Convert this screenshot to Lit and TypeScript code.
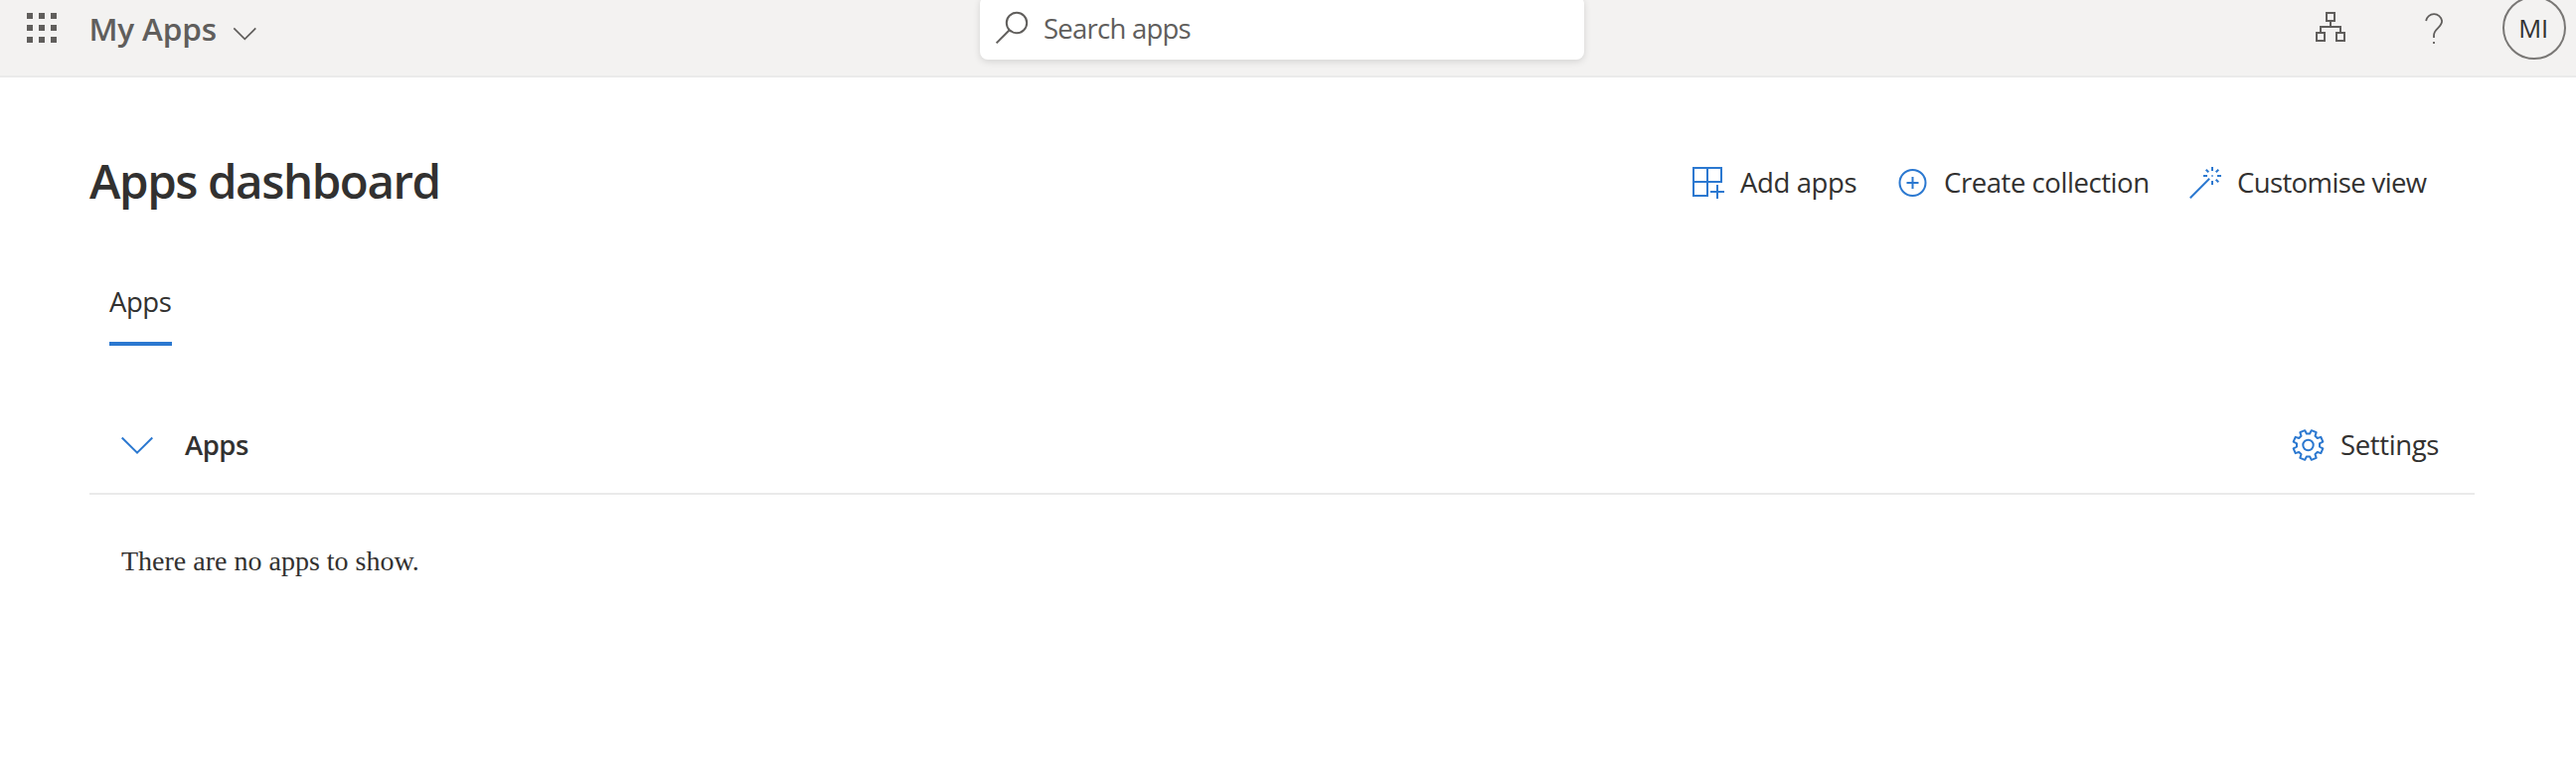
import { LitElement, html, css, svg } from "lit";
import { customElement } from "lit/decorators.js";

const gearPath = (() => {
  const pts: string[] = [];
  const at = (deg: number, r: number) => {
    const a = (deg * Math.PI) / 180;
    pts.push(`${(15.5 + r * Math.sin(a)).toFixed(2)} ${(16 - r * Math.cos(a)).toFixed(2)}`);
  };
  for (let k = 0; k < 8; k++) {
    const mid = 22.5 + 45 * k;
    at(mid - 14.5, 11.6);
    at(mid - 10, 15.2);
    at(mid + 10, 15.2);
    at(mid + 14.5, 11.6);
  }
  return `M${pts.join("L")}Z`;
})();

const icons = {
  add: svg`<path d="M1 1H29V15H1ZM15 1V29H1V15M18 25H32M25 18V32"/>`,
  create: svg`<circle cx="16.5" cy="16" r="13"/><path d="M10.5 16H22.5M16.5 10V22"/>`,
  wand: svg`<path d="M.8 31.2L20.2 11.8M23 0V4M23 14V18M14 9H18M28 9H32M16.7 2.7L19.3 5.3M26.7 5.3L29.3 2.7M26.7 12.7L29.3 15.3"/><path d="M22 9H24" opacity=".6"/>`,
  gear: svg`<path d=${gearPath} stroke-linejoin="round"/><circle cx="15.5" cy="16" r="5.2"/>`,
};

@customElement("app-root")
export class AppRoot extends LitElement {
  static styles = css`
    :host {
      display: block;
      height: 778px;
      overflow: hidden;
      background: #fff;
      color: #323130;
      font: 27.5px/40px "Open Sans", "Noto Sans", sans-serif;
    }
    * { box-sizing: border-box; }
    svg {
      display: block;
      flex: none;
      fill: none;
      stroke: currentColor;
      stroke-width: 2;
      overflow: visible;
    }
    .header {
      display: grid;
      grid-template-columns: 986px 608px 1fr;
      height: 78px;
      background: #f3f2f1;
      border-bottom: 2px solid #eaeaea;
      color: #605e5c;
      overflow: hidden;
    }
    .brand, .tools, .search {
      display: flex;
      align-items: center;
      height: 64px;
      margin-top: -4px;
    }
    .brand { padding-left: 27px; }
    .waffle {
      display: grid;
      grid-template-columns: repeat(3, 6px);
      gap: 6px;
    }
    .waffle i { height: 6px; background: #605e5c; }
    .product {
      margin: 2px 0 0 32.5px;
      width: 145px;
      font-size: 31.5px;
      font-weight: 600;
      letter-spacing: -0.15px;
      white-space: nowrap;
    }
    .brand svg { stroke-width: 1.7; margin-top: 12px; }
    .search {
      padding-left: 16px;
      gap: 16px;
      background: #fff;
      border-radius: 8px;
      box-shadow: 0 2px 7px rgba(0, 0, 0, 0.13);
      letter-spacing: -0.76px;
    }
    .search span { margin-top: 2px; }
    .tools { justify-content: flex-end; padding-right: 10px; }
    .org { margin-right: 77px; }
    .help { margin-right: 59px; stroke-width: 1.8; }
    .avatar {
      display: flex;
      align-items: center;
      justify-content: center;
      width: 64px;
      height: 64px;
      padding-right: 2px;
      border: 2px solid #797775;
      border-radius: 50%;
      color: #323130;
      font-size: 25.5px;
      letter-spacing: -0.4px;
    }
    .main { padding: 70px 102px 0 90px; }
    .top {
      display: flex;
      justify-content: space-between;
      align-items: center;
      height: 72px;
    }
    .title {
      margin: -4px 0 0;
      font-size: 47.5px;
      line-height: 64px;
      font-weight: 600;
      letter-spacing: -1.42px;
    }
    .actions {
      display: grid;
      grid-template-columns: 205px 295px 247px;
      margin-right: 40px;
    }
    .action {
      display: flex;
      align-items: center;
      gap: 16px;
      white-space: nowrap;
    }
    .action svg { color: #2b78d0; }
    .add { letter-spacing: -0.37px; }
    .create { letter-spacing: -0.44px; }
    .wand { letter-spacing: -0.62px; }
    .gear { letter-spacing: -0.37px; width: 147px; margin-top: 2px; }
    .tabs { display: flex; padding: 63px 20px 0; }
    .tab {
      width: 63px;
      height: 65px;
      padding-top: 1px;
      border-bottom: 4px solid #2b78d0;
      letter-spacing: -0.45px;
    }
    .section {
      display: flex;
      align-items: center;
      height: 100px;
      margin-top: 50px;
      padding: 0 36px 0 32px;
      border-bottom: 2px solid #eaeaea;
    }
    .section svg.fold { color: #2b78d0; margin-top: 1px; }
    .name { flex: 1; margin: 2px 0 0 32px; font-weight: 600; letter-spacing: -0.5px; }
    .empty {
      margin: 47px 0 0 32px;
      font-family: "Liberation Serif", serif;
      font-size: 28px;
    }
  `;

  private action(icon: keyof typeof icons, label: string) {
    return html`<div class="action ${icon}">
      <svg width="32" height="32">${icons[icon]}</svg><span>${label}</span>
    </div>`;
  }

  render() {
    return html`
      <div class="header">
        <div class="brand">
          <div class="waffle">${Array.from({ length: 9 }, () => html`<i></i>`)}</div>
          <div class="product">My Apps</div>
          <svg width="22" height="12"><path d="M.3 .4L11.3 11.4L22.3 .4"/></svg>
        </div>
        <div class="search">
          <svg width="32" height="32"><circle cx="21" cy="11" r="10.2"/><path d="M13.7 18.3L.6 31.4"/></svg>
          <span>Search apps</span>
        </div>
        <div class="tools">
          <svg class="org" width="32" height="32"><path d="M11 1H19V9H11ZM1 21H9V29H1ZM21 21H29V29H21ZM15 9V15M5 21V15H25V21"/></svg>
          <svg class="help" width="20" height="32"><path d="M2.1 9A8.1 8.1 0 0 1 18.1 9C18.1 12.5 16.2 14.2 14 16.3C11.2 18.9 10 20.3 10 23.5V26M10 30V32"/></svg>
          <div class="avatar">MI</div>
        </div>
      </div>
      <div class="main">
        <div class="top">
          <h1 class="title">Apps dashboard</h1>
          <div class="actions">
            ${this.action("add", "Add apps")}
            ${this.action("create", "Create collection")}
            ${this.action("wand", "Customise view")}
          </div>
        </div>
        <div class="tabs"><div class="tab">Apps</div></div>
        <div class="section">
          <svg class="fold" width="32" height="16"><path d="M.7 .5L16 15.6L31.3 .5"/></svg>
          <div class="name">Apps</div>
          ${this.action("gear", "Settings")}
        </div>
        <div class="empty">There are no apps to show.</div>
      </div>
    `;
  }
}
